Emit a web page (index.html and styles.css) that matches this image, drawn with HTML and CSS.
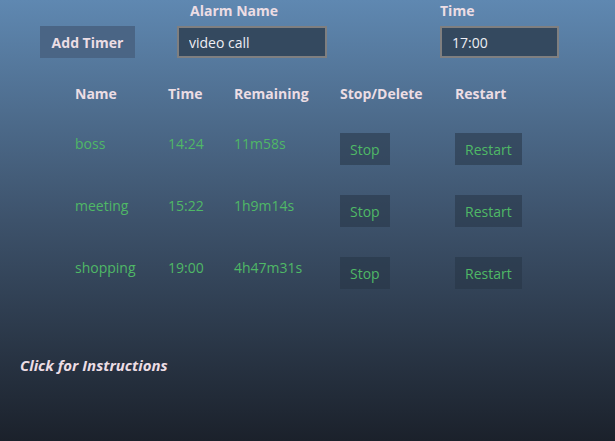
FILE: index.html
```html
<!DOCTYPE html>
<html lang="en">
<head>
  <meta charset="UTF-8" />
  <meta name="viewport" content="width=device-width, initial-scale=1.0" />
  <title>Timers</title>
  <link rel="stylesheet" href="styles.css">
</head>
<body>
  <!-- New timer form -->
  <div class="top-row">
    <button class="add-btn">Add Timer</button>
    <div class="field field-name">
      <label for="alarmName">Alarm Name</label>
      <input type="text" id="alarmName" value="video call" />
    </div>
    <div class="field field-time">
      <label for="alarmTime">Time</label>
      <input type="text" id="alarmTime" value="17:00" />
    </div>
  </div>

  <!-- Timer list -->
  <div class="timer-grid">
    <div class="head">Name</div>
    <div class="head">Time</div>
    <div class="head">Remaining</div>
    <div class="head">Stop/Delete</div>
    <div class="head">Restart</div>

    <div class="cell">boss</div>
    <div class="cell">14:24</div>
    <div class="cell">11m58s</div>
    <div><button class="row-btn">Stop</button></div>
    <div><button class="row-btn">Restart</button></div>

    <div class="cell">meeting</div>
    <div class="cell">15:22</div>
    <div class="cell">1h9m14s</div>
    <div><button class="row-btn">Stop</button></div>
    <div><button class="row-btn">Restart</button></div>

    <div class="cell">shopping</div>
    <div class="cell">19:00</div>
    <div class="cell">4h47m31s</div>
    <div><button class="row-btn">Stop</button></div>
    <div><button class="row-btn">Restart</button></div>
  </div>

  <div class="instructions">Click for Instructions</div>
</body>
</html>
```

FILE: styles.css
```css
html {
  height: 100%;
}

body {
  font-family: "Open Sans", "Noto Sans", sans-serif;
  font-size: 14px;
  color: #ecdde4;
  margin: 0;
  min-height: 100%;
  background: linear-gradient(to bottom, #5f88b1 0%, #3d526b 50%, #1b212b 100%);
}

.top-row {
  display: flex;
  align-items: flex-end;
  padding-left: 40px;
  padding-top: 1px;
}

.add-btn {
  font-family: inherit;
  font-size: 14px;
  font-weight: bold;
  color: #ecdde4;
  background: #4a6585;
  border: none;
  width: 95px;
  height: 32px;
  padding: 0;
}

.field {
  display: flex;
  flex-direction: column;
}

.field label {
  font-weight: bold;
  line-height: 19px;
  margin-bottom: 6px;
}

.field-name {
  margin-left: 42px;
}

.field-name label {
  padding-left: 13px;
}

.field-time {
  margin-left: 113px;
}

.field input {
  font-family: inherit;
  font-size: 14px;
  color: #eeeef4;
  background: #34495f;
  border: 2px solid #7f7f80;
  height: 32px;
  box-sizing: border-box;
  padding: 0 10px;
  outline: none;
}

.field-name input {
  width: 150px;
}

.field-time input {
  width: 119px;
}

.timer-grid {
  display: grid;
  grid-template-columns: 93px 66px 106px 115px auto;
  grid-template-rows: 19px;
  grid-auto-rows: 32px;
  row-gap: 30px;
  margin: 26px 0 0 75px;
  align-items: start;
}

.head {
  font-weight: bold;
  line-height: 19px;
}

.cell {
  color: #4fb866;
  line-height: 19px;
  padding-top: 1px;
}

.row-btn {
  font-family: inherit;
  font-size: 14px;
  color: #4fb866;
  background: rgba(38, 52, 70, 0.55);
  border: none;
  height: 32px;
  padding: 0 10px;
}

.instructions {
  font-weight: bold;
  font-style: italic;
  font-size: 15px;
  margin: 67px 0 0 20px;
  line-height: 19px;
}
```
